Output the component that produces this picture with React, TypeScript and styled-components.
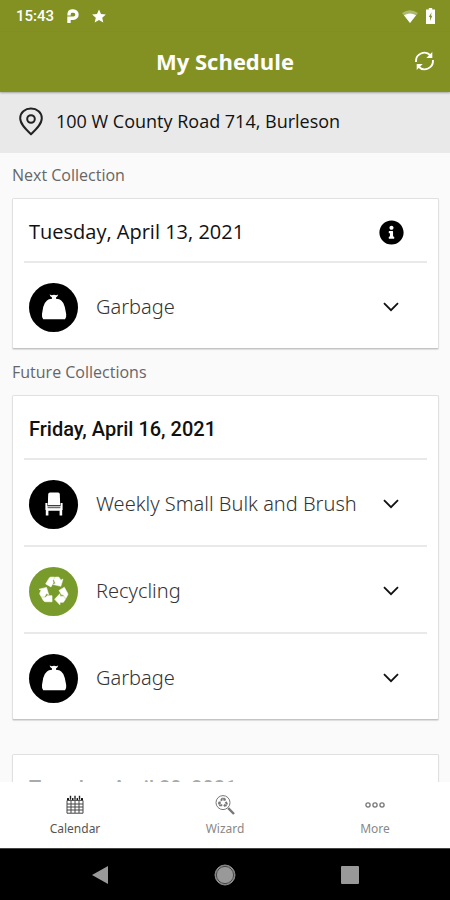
import React from "react";
import styled, { createGlobalStyle } from "styled-components";
import { FaInfoCircle } from "react-icons/fa";

const GlobalStyle = createGlobalStyle`
  * { box-sizing: border-box; }
  body { margin: 0; background: #fafafa; font-family: "Open Sans", "Noto Sans", sans-serif; color: #111; }
  button { font: inherit; color: inherit; border: 0; padding: 0; background: none; cursor: pointer; }
  svg { display: block; flex: none; }
  h1, h2, h3, p { margin: 0; }
`;

const Screen = styled.div`
  display: flex;
  flex-direction: column;
  height: 100vh;
  overflow: hidden;
`;

const StatusBar = styled.div`
  display: flex;
  align-items: center;
  justify-content: space-between;
  height: 32px;
  padding: 0 15px 0 16px;
  background: #839123;
  color: #fff;
  font: 500 15px/20px Roboto, sans-serif;
`;

const StatusGroup = styled.div<{ $gap: number }>`
  display: flex;
  align-items: center;
  gap: ${(p) => p.$gap}px;
`;

const TitleBar = styled.header`
  display: grid;
  grid-template-columns: 52px 1fr 52px;
  align-items: center;
  height: 60px;
  padding-bottom: 2px;
  background: #839123;
  color: #fff;
  box-shadow: 0 1px 2px rgba(0, 0, 0, 0.3);
  z-index: 1;
`;

const PageTitle = styled.h1`
  grid-column: 2;
  text-align: center;
  font-size: 22px;
  line-height: 30px;
  font-weight: 700;
`;

const RefreshButton = styled.button`
  display: grid;
  place-items: center;
  height: 48px;
`;

const AddressBar = styled.div`
  display: flex;
  align-items: center;
  gap: 12px;
  height: 61px;
  padding: 0 18px 3px;
  background: #e9e9e9;
  font-size: 18px;
  line-height: 24px;
`;

const Content = styled.main`
  flex: 1;
  min-height: 0;
  overflow: hidden;
  padding: 0 11px 0 12px;
`;

const SectionLabel = styled.h2`
  padding: 11px 0;
  font-size: 16px;
  line-height: 23px;
  font-weight: 400;
  color: #666;
`;

const Card = styled.section`
  margin-bottom: 34px;
  padding: 0 11px;
  background: #fff;
  border: 1px solid #e0e0e0;
  border-bottom-color: #c4c4c4;
  border-radius: 2px;
  box-shadow: 0 1px 1px rgba(0, 0, 0, 0.12);

  &:has(+ h2) { margin-bottom: 1px; }
`;

const CardHead = styled.div`
  display: flex;
  align-items: center;
  justify-content: space-between;
  height: 62px;
  padding: 4px 23px 0 5px;
`;

const CardDate = styled.h3<{ $strong?: boolean; $muted?: boolean }>`
  font-family: ${(p) => (p.$strong ? "Roboto" : '"Open Sans"')}, sans-serif;
  font-size: 20px;
  line-height: 28px;
  font-weight: ${(p) => (p.$strong ? 500 : 400)};
  color: ${(p) => (p.$muted ? "#aaa" : "#111")};
`;

const PickupRow = styled.button`
  display: flex;
  align-items: center;
  gap: 18px;
  width: 100%;
  height: 87px;
  padding: 3px 28px 0 5px;
  border-top: 2px solid #e9e9e9;
  text-align: left;
`;

const PickupName = styled.span`
  flex: 1;
  white-space: nowrap;
  font-family: "Noto Sans", sans-serif;
  font-size: 20px;
  line-height: 28px;
  font-weight: 300;
  color: #333;
`;

const Disc = styled.span<{ $color: string }>`
  display: grid;
  place-items: center;
  flex: none;
  width: 49px;
  height: 49px;
  border-radius: 50%;
  background: ${(p) => p.$color};
  color: #fff;
`;

const TabBar = styled.nav`
  display: grid;
  grid-template-columns: repeat(3, 1fr);
  height: 66px;
  background: #fff;
`;

const Tab = styled.button<{ $active?: boolean }>`
  display: flex;
  flex-direction: column;
  align-items: center;
  gap: 5px;
  padding-top: 13px;
  color: ${(p) => (p.$active ? "#555" : "#888")};
  font-family: "Noto Sans", sans-serif;
  font-size: 12px;
  line-height: 18px;
`;

const SystemNav = styled.nav`
  display: flex;
  align-items: center;
  justify-content: center;
  gap: 77px;
  height: 52px;
  background: #000;
  border-top: 1px solid #444;
`;

const SystemButton = styled.button`
  display: grid;
  place-items: center;
  width: 48px;
  height: 48px;
`;

const ParkingIcon = () => (
  <svg width="12" height="14" viewBox="0 0 12 14" fill="none" stroke="#fff" strokeWidth="3.4">
    <path d="M2 14V9.2H6.4A3.6 3.6 0 1 0 6.4 2H5Q2 2 2 6.4" />
  </svg>
);

const StarIcon = () => (
  <svg width="14" height="14" viewBox="0 0 14 14" fill="#fff">
    <path d="M7 .4 9 4.9l4.9.5-3.7 3.3 1.1 4.9L7 11l-4.3 2.6 1.1-4.9L.1 5.4 5 4.9Z" />
  </svg>
);

const WifiIcon = () => (
  <svg width="16" height="13" viewBox="0 0 16 13" fill="#fff">
    <path d="M0 3Q8-2.6 16 3L8 13Z" opacity=".35" />
    <path d="M2 5.2Q8 1.6 14 5.2L8 13Z" />
  </svg>
);

const BatteryIcon = () => (
  <svg width="9" height="16" viewBox="0 0 9 16">
    <path d="M2.8 0h3.4v1.6H9V16H0V1.6h2.8Z" fill="#fff" />
    <path d="M5.6 4.2 2.8 9h1.3v4L6.3 7.8H5Z" fill="#839123" />
  </svg>
);

const RefreshIcon = () => (
  <svg width="19" height="20" viewBox="0 0 19 20" fill="none" stroke="#fff" strokeWidth="1.9">
    <path d="M1.1 11A8.3 8.3 0 0 1 15.5 4.5M17.9 9A8.3 8.3 0 0 1 3.5 15.5" />
    <path d="M17.3 1v6h-6ZM1.7 19v-6h6Z" fill="#fff" stroke="none" />
  </svg>
);

const PinIcon = () => (
  <svg width="26" height="29" viewBox="0 0 26 29" fill="none" stroke="#222" strokeWidth="2">
    <path d="M13 27.2C8 22.5 2.2 17 2.2 11.2 2.2 5.6 7 1.6 13 1.6s10.8 4 10.8 9.6C23.8 17 18 22.5 13 27.2Z" />
    <circle cx="13" cy="12" r="3.8" />
  </svg>
);

const ChevronIcon = () => (
  <svg width="16" height="10" viewBox="0 0 16 10" fill="none" stroke="#111" strokeWidth="1.8">
    <path d="m1 1.2 7 7 7-7" />
  </svg>
);

const BagIcon = () => (
  <svg width="26" height="26" viewBox="0 0 26 26" fill="#fff">
    <path d="M8.6.6 10.8 1.2 13 .8 15.2 1.2 17.2.6Q16.8 2.6 15 3.4V4.8Q18.8 5.2 20.2 6.4 23.2 8.8 23.8 13L25.2 20Q25.6 23.6 24 25.2H2.2Q.6 23.6 1 20L2.2 13Q3 8.8 6 6.4 7.4 5.2 11 4.8V3.4Q9 2.6 8.6.6Z" />
  </svg>
);

const ChairIcon = () => (
  <svg width="18" height="24" viewBox="0 0 18 24" fill="#fff">
    <path d="M5 .5H13.2Q14.6.5 14.8 2L15.2 13.2H2.8L3.2 2Q3.4.5 5 .5Z" />
    <path d="M.4 11h2v3.2h13.2V11h2v7h-.4v5.4h-2.6v-4.6H3.4v4.6H.8V18H.4Z" />
    <path d="M2.6 15.7h12.8" stroke="#000" strokeWidth=".7" />
  </svg>
);

const foldedArrow =
  "M6.2 7.4 9.4 2Q10 1 11.2 1H14.6L12.8 4.4 13.4 6.2 11.2 10.2ZM15.3 1H17.8Q18.8 1 19.3 2L20.4 3.9 22.4 2.8 20.4 9.6 13.4 8 15.4 6.8 13.8 3.6Z";

const RecycleArrows = () => (
  <>
    {[0, 120, 240].map((angle) => (
      <path key={angle} d={foldedArrow} transform={`rotate(${angle} 14 14)`} />
    ))}
  </>
);

const RecycleIcon = () => (
  <svg width="30" height="30" viewBox="0 0 28 28" fill="#fff" stroke="#fff" strokeWidth=".5">
    <RecycleArrows />
  </svg>
);

const CalendarIcon = () => (
  <svg width="18" height="20" viewBox="0 0 18 20" fill="none" stroke="#444">
    <path d="M1 5.5V18.2H17V5.5M5 6v12M9 6v12M13 6v12M1 9h16M1 12h16M1 15h16" />
    <path d="M1 4.4h16" stroke="#111" strokeWidth="2.6" />
    <path d="M4.5 1v4M9 1v4M13.5 1v4" stroke="#fff" strokeWidth="3" />
    <path d="M4.5.8v4M9 .8v4M13.5.8v4" stroke="#222" strokeWidth="1.4" />
  </svg>
);

const WizardIcon = () => (
  <svg width="20" height="20" viewBox="0 0 20 20" fill="none" stroke="#777">
    <circle cx="8" cy="7.6" r="7" />
    <path d="M13.2 13.2 19 19" strokeWidth="2.4" />
    <g transform="translate(2.8 2.4) scale(.37)" fill="#777" stroke="none">
      <RecycleArrows />
    </g>
  </svg>
);

const MoreIcon = () => (
  <svg width="20" height="20" viewBox="0 0 20 20" fill="none" stroke="#777" strokeWidth="1.3">
    <circle cx="3" cy="10" r="2.1" />
    <circle cx="10" cy="10" r="2.1" />
    <circle cx="17" cy="10" r="2.1" />
  </svg>
);

const pickups = {
  garbage: { name: "Garbage", color: "#000", Icon: BagIcon },
  bulk: { name: "Weekly Small Bulk and Brush", color: "#000", Icon: ChairIcon },
  recycling: { name: "Recycling", color: "#789b2b", Icon: RecycleIcon },
};

type PickupKind = keyof typeof pickups;

function Pickup({ kind }: { kind: PickupKind }) {
  const { name, color, Icon } = pickups[kind];
  return (
    <PickupRow aria-expanded={false}>
      <Disc $color={color}><Icon /></Disc>
      <PickupName>{name}</PickupName>
      <ChevronIcon />
    </PickupRow>
  );
}

export default function App() {
  return (
    <>
      <GlobalStyle />
      <Screen>
        <StatusBar>
          <StatusGroup $gap={13}>
            <span>15:43</span>
            <ParkingIcon />
            <StarIcon />
          </StatusGroup>
          <StatusGroup $gap={8}>
            <WifiIcon />
            <BatteryIcon />
          </StatusGroup>
        </StatusBar>
        <TitleBar>
          <PageTitle>My Schedule</PageTitle>
          <RefreshButton aria-label="Refresh"><RefreshIcon /></RefreshButton>
        </TitleBar>
        <AddressBar>
          <PinIcon />
          <p>100 W County Road 714, Burleson</p>
        </AddressBar>
        <Content>
          <SectionLabel>Next Collection</SectionLabel>
          <Card>
            <CardHead>
              <CardDate>Tuesday, April 13, 2021</CardDate>
              <button aria-label="Collection information"><FaInfoCircle size={25} color="#000" /></button>
            </CardHead>
            <Pickup kind="garbage" />
          </Card>
          <SectionLabel>Future Collections</SectionLabel>
          <Card>
            <CardHead>
              <CardDate $strong>Friday, April 16, 2021</CardDate>
            </CardHead>
            <Pickup kind="bulk" />
            <Pickup kind="recycling" />
            <Pickup kind="garbage" />
          </Card>
          <Card>
            <CardHead>
              <CardDate $strong $muted>Tuesday, April 20, 2021</CardDate>
            </CardHead>
            <Pickup kind="garbage" />
          </Card>
        </Content>
        <TabBar>
          <Tab $active aria-current="page"><CalendarIcon />Calendar</Tab>
          <Tab><WizardIcon />Wizard</Tab>
          <Tab><MoreIcon />More</Tab>
        </TabBar>
        <SystemNav>
          <SystemButton aria-label="Back">
            <svg width="16" height="18" viewBox="0 0 16 18"><path d="M16 0v18L0 9Z" fill="#999" /></svg>
          </SystemButton>
          <SystemButton aria-label="Home">
            <svg width="22" height="22" viewBox="0 0 22 22">
              <circle cx="11" cy="11" r="10" fill="#999" stroke="#888" />
              <circle cx="11" cy="11" r="8.6" fill="none" stroke="#444" />
            </svg>
          </SystemButton>
          <SystemButton aria-label="Recent apps">
            <svg width="18" height="18" viewBox="0 0 18 18"><rect width="18" height="18" rx="1" fill="#999" /></svg>
          </SystemButton>
        </SystemNav>
      </Screen>
    </>
  );
}
